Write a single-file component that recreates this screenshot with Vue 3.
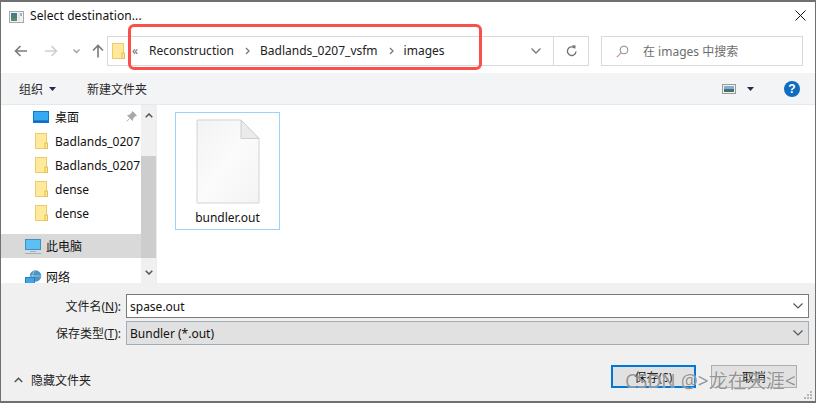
<script setup>
const pins = [
  { name: 'Badlands_0207' },
  { name: 'Badlands_0207' },
  { name: 'dense' },
  { name: 'dense' },
]
</script>

<template>
  <div class="win">
    <header class="title">
      <svg class="appicon" width="16" height="16" viewBox="0 0 16 16">
        <rect x="0.5" y="3.5" width="14" height="11" fill="#f2f2f2" stroke="#a8a8a8" />
        <rect x="2" y="5" width="6" height="8" fill="#3f7f86" />
        <rect x="2" y="10" width="6" height="3" fill="#5f8a5f" />
        <rect x="9" y="5" width="2" height="8" fill="#dfe5ea" />
        <rect x="11" y="5" width="2" height="3" fill="#9fb4c8" />
      </svg>
      <span class="title-text">Select destination...</span>
      <svg class="close" width="11" height="11" viewBox="0 0 11 11">
        <path d="M0.5 0.5L10.5 10.5M10.5 0.5L0.5 10.5" stroke="#111" stroke-width="1" fill="none" />
      </svg>
    </header>

    <nav class="navrow">
      <div class="navbtns">
        <svg width="14" height="12" viewBox="0 0 14 12" class="b1">
          <path d="M13 6H2M6.5 1L1.5 6l5 5" stroke="#7a7a7a" stroke-width="1.6" fill="none" />
        </svg>
        <svg width="14" height="12" viewBox="0 0 14 12" class="b2">
          <path d="M1 6h11M7.5 1l5 5-5 5" stroke="#cfcfcf" stroke-width="1.6" fill="none" />
        </svg>
        <svg width="7" height="5" viewBox="0 0 7 5" class="b3">
          <path d="M0.5 0.5L3.5 3.5L6.5 0.5" stroke="#9a9a9a" stroke-width="1.3" fill="none" />
        </svg>
        <svg width="12" height="14" viewBox="0 0 12 14" class="b4">
          <path d="M6 13.5V2M1 6.5l5-5 5 5" stroke="#7a7a7a" stroke-width="1.6" fill="none" />
        </svg>
      </div>
      <div class="address">
        <svg class="folder" width="13" height="16" viewBox="0 0 13 16">
          <rect x="0.5" y="0.5" width="11" height="15" fill="#ffe99b" stroke="#eccb6a" />
          <rect x="10" y="10" width="2.5" height="5.5" fill="#ffe99b" stroke="#e8bf55" stroke-width="1" />
        </svg>
        <span class="crumb-more">«</span>
        <span class="crumb c1">Reconstruction</span>
        <svg class="sep" width="5" height="8" viewBox="0 0 5 8"><path d="M1 1l3 3-3 3" stroke="#777" stroke-width="1.3" fill="none" /></svg>
        <span class="crumb">Badlands_0207_vsfm</span>
        <svg class="sep" width="5" height="8" viewBox="0 0 5 8"><path d="M1 1l3 3-3 3" stroke="#777" stroke-width="1.3" fill="none" /></svg>
        <span class="crumb">images</span>
        <svg class="addr-chev" width="10" height="6" viewBox="0 0 10 6"><path d="M0.5 0.5L5 5L9.5 0.5" stroke="#7a7a7a" stroke-width="1.4" fill="none" /></svg>
        <div class="refresh">
          <svg width="11" height="12" viewBox="0 0 11 12">
            <path d="M8.6 3A4.3 4.3 0 1 0 10 6.5" stroke="#6f6f6f" stroke-width="1.3" fill="none" />
            <path d="M6 0.2L9.6 0.6L9.2 4Z" fill="#6f6f6f" />
          </svg>
        </div>
      </div>
      <div class="search">
        <svg width="13" height="13" viewBox="0 0 13 13">
          <circle cx="8" cy="5" r="3.9" stroke="#8a8a8a" stroke-width="1" fill="none" />
          <path d="M5 8L0.8 12.2" stroke="#c79a8a" stroke-width="1.2" />
        </svg>
        <span>在 images 中搜索</span>
      </div>
    </nav>

    <div class="toolbar">
      <span class="tool t1">组织</span>
      <svg class="caret" width="7" height="4" viewBox="0 0 7 4"><path d="M0 0h7L3.500 4z" fill="#1f2d45" /></svg>
      <span class="tool t2">新建文件夹</span>
      <svg class="viewicon" width="14" height="10" viewBox="0 0 14 10">
        <rect x="0.5" y="0.5" width="13" height="9" fill="#eef3f7" stroke="#9a9a9a" />
        <rect x="2" y="2" width="10" height="3" fill="#7fb0d8" />
        <rect x="2" y="5" width="10" height="3" fill="#47705f" />
      </svg>
      <svg class="caret2" width="7" height="4" viewBox="0 0 7 4"><path d="M0 0h7L3.500 4z" fill="#1f2d45" /></svg>
      <div class="help">?</div>
    </div>

    <main class="content">
      <aside class="side">
        <div class="tree">
          <div class="row quick">
            <svg class="ic desk" width="16" height="12" viewBox="0 0 16 12">
              <rect x="0" y="0" width="16" height="12" fill="#0c78d0" />
              <rect x="1" y="1" width="14" height="9" fill="#37a8f2" />
              <path d="M1 10h14" stroke="#0a5fa8" />
            </svg>
            <span>桌面</span>
            <svg class="pin" width="11" height="11" viewBox="0 0 11 11">
              <path d="M6.500 0.500L10.500 4.500L9 5L6.800 7.500L6.500 9.500L1.500 4.500L3.500 4L6 1.800ZM3.500 7.500L0.500 10.500" fill="#a8a8a8" stroke="#a8a8a8" stroke-width="0.8" />
            </svg>
          </div>
          <div v-for="(p, i) in pins" :key="i" class="row quick">
            <svg class="ic fold" width="13" height="16" viewBox="0 0 13 16">
              <rect x="0.500" y="0.500" width="11" height="15" fill="#ffe99b" stroke="#eccb6a" />
              <rect x="10" y="10" width="2.500" height="5.500" fill="#ffe99b" stroke="#e8bf55" />
            </svg>
            <span>{{ p.name }}</span>
          </div>
          <div class="row pc">
            <svg class="ic" width="17" height="15" viewBox="0 0 17 15">
              <rect x="0.500" y="0.500" width="15" height="10" fill="#5cc0f5" stroke="#3f8fc4" />
              <path d="M5 12.500h6M0 14.500h16" stroke="#9fb0c4" stroke-width="1" />
            </svg>
            <span>此电脑</span>
          </div>
          <div class="row net">
            <svg class="ic" width="17" height="15" viewBox="0 0 17 15">
              <circle cx="10.500" cy="6" r="5.800" fill="#4f94c8" />
              <path d="M10 0.500C7 3 7 9 10 11.500M5 6h11" stroke="#a8d4ee" stroke-width="0.800" fill="none" />
              <rect x="0.500" y="7.500" width="9" height="7" fill="#3fa4e8" stroke="#2d7fba" />
            </svg>
            <span>网络</span>
          </div>
        </div>
        <div class="scroll">
          <svg class="arrow" width="8" height="5" viewBox="0 0 8 5"><path d="M0.700 4.300L4 1L7.300 4.300" stroke="#555" stroke-width="1.500" fill="none" /></svg>
          <div class="thumb"></div>
          <svg class="arrow arrow-d" width="8" height="5" viewBox="0 0 8 5"><path d="M0.700 0.700L4 4L7.300 0.700" stroke="#555" stroke-width="1.500" fill="none" /></svg>
        </div>
      </aside>
      <section class="files">
        <div class="tile">
          <svg width="64" height="85" viewBox="0 0 64 85">
            <defs>
              <linearGradient id="sheet" x1="0" y1="0" x2="1" y2="1">
                <stop offset="0" stop-color="#f3f3f3" />
                <stop offset="0.5" stop-color="#fbfbfb" />
                <stop offset="1" stop-color="#f4f4f4" />
              </linearGradient>
            </defs>
            <path d="M1 1H45L63 19.500V84H1Z" fill="url(#sheet)" stroke="#d4d4d4" stroke-width="1" />
            <path d="M45 1V19.500H63Z" fill="#ebebeb" stroke="#cfcfcf" stroke-width="1" />
          </svg>
          <span class="tile-label">bundler.out</span>
        </div>
      </section>
    </main>

    <footer class="bottom">
      <div class="field first">
        <label>文件名(<u>N</u>):</label>
        <div class="box input">
          <span>spase.out</span>
          <svg width="10" height="6" viewBox="0 0 10 6"><path d="M0.500 0.500L5 5L9.500 0.500" stroke="#555" stroke-width="1.200" fill="none" /></svg>
        </div>
      </div>
      <div class="field second">
        <label>保存类型(<u>T</u>):</label>
        <div class="box select">
          <span>Bundler (*.out)</span>
          <svg width="10" height="6" viewBox="0 0 10 6"><path d="M0.500 0.500L5 5L9.500 0.500" stroke="#555" stroke-width="1.200" fill="none" /></svg>
        </div>
      </div>
      <div class="actions">
        <div class="hide">
          <svg width="9" height="6" viewBox="0 0 9 6"><path d="M0.800 5L4.500 1.300L8.200 5" stroke="#555" stroke-width="1.600" fill="none" /></svg>
          <span>隐藏文件夹</span>
        </div>
        <div class="btn primary">保存(S)</div>
        <div class="btn">取消</div>
      </div>
      <svg class="grip" width="9" height="9" viewBox="0 0 9 9" fill="#b5b5b5">
        <rect x="6" y="0" width="2" height="2" /><rect x="3" y="3" width="2" height="2" /><rect x="6" y="3" width="2" height="2" />
        <rect x="0" y="6" width="2" height="2" /><rect x="3" y="6" width="2" height="2" /><rect x="6" y="6" width="2" height="2" />
      </svg>
    </footer>

    <div class="annot"></div>
    <div class="mark">CSDN @&gt;龙在天涯&lt;</div>
  </div>
</template>

<style scoped>
.win {
  position: relative;
  width: 816px;
  height: 403px;
  box-sizing: border-box;
  border: 1px solid #707070;
  border-bottom-width: 2px;
  border-top-width: 2px;
  background: #fff;
  display: flex;
  flex-direction: column;
  overflow: hidden;
  font-family: "Noto Sans", "Noto Sans CJK SC", sans-serif;
  font-size: 12px;
  color: #111;
}
.title {
  height: 27px;
  flex: none;
  display: flex;
  align-items: center;
  padding: 0 9px 0 8px;
  background: #fff;
}
.title-text { margin-left: 5px; font-size: 12px; letter-spacing: 0.1px; }
.close { margin-left: auto; }
.navrow {
  height: 44px;
  flex: none;
  display: flex;
  align-items: flex-start;
  padding-top: 7px;
  box-sizing: border-box;
}
.navbtns { width: 106px; height: 30px; flex: none; display: flex; align-items: center; }
.b1 { margin-left: 13px; }
.b2 { margin-left: 16px; }
.b3 { margin-left: 15px; }
.b4 { margin-left: 12px; }
.address {
  width: 482px;
  height: 30px;
  flex: none;
  box-sizing: border-box;
  border: 1px solid #d9d9d9;
  display: flex;
  align-items: center;
}
.folder { margin-left: 4px; }
.crumb-more { margin-left: 7px; color: #666; font-size: 12px; width: 12px; margin-bottom: 2px; }
.crumb { font-size: 12px; color: #222; margin-bottom: 2px; }
.c1 { margin-left: 5px; }
.sep { margin: 0 10px 0 11px; }
.addr-chev { margin-left: auto; margin-right: 12px; }
.refresh {
  width: 34px;
  height: 28px;
  border-left: 1px solid #d9d9d9;
  display: flex;
  align-items: center;
  justify-content: center;
}
.search {
  width: 202px;
  height: 30px;
  margin-left: 12px;
  flex: none;
  box-sizing: border-box;
  border: 1px solid #d9d9d9;
  display: flex;
  align-items: center;
  padding-left: 14px;
  color: #6d6d6d;
}
.search span { margin-left: 14px; }
.toolbar {
  height: 32px;
  flex: none;
  box-sizing: border-box;
  background: #f3f4f6;
  border-bottom: 1px solid #e8e8e8;
  display: flex;
  align-items: center;
  color: #2b2b2b;
}
.t1 { margin-left: 18px; }
.caret { margin-left: 6px; }
.t2 { margin-left: 31px; }
.viewicon { margin-left: auto; }
.caret2 { margin-left: 11px; }
.help {
  width: 16px;
  height: 16px;
  margin: 0 15px 0 30px;
  border-radius: 50%;
  background: #0f6cc0;
  color: #fff;
  font: bold 12px/16px "Liberation Sans", sans-serif;
  text-align: center;
}
.content {
  height: 178px;
  flex: none;
  display: flex;
  background: #fff;
}
.side {
  width: 155px;
  flex: none;
  display: flex;
  border-right: 1px solid #ededed;
}
.tree {
  width: 140px;
  flex: none;
  overflow: hidden;
}
.row {
  height: 24px;
  display: flex;
  align-items: center;
  white-space: nowrap;
  position: relative;
}
.quick .ic { margin-left: 34px; margin-right: 7px; flex: none; }
.quick .desk { margin-left: 32px; margin-right: 6px; }
.pin { position: absolute; left: 125px; top: 6px; }
.pc {
  margin-top: 9px;
  background: #d9d9d9;
}
.pc .ic { margin-left: 24px; margin-right: 4px; flex: none; }
.net { margin-top: 7px; }
.net .ic { margin-left: 24px; margin-right: 4px; flex: none; }
.scroll {
  width: 15px;
  flex: none;
  background: #f0f0f0;
  display: flex;
  flex-direction: column;
  align-items: center;
  padding-top: 8px;
  box-sizing: border-box;
}
.arrow { flex: none; }
.thumb {
  width: 15px;
  height: 102px;
  margin-top: 38px;
  background: #cdcdcd;
  flex: none;
}
.arrow-d { margin-top: 12px; }
.files { flex: 1; padding: 7px 0 0 18px; }
.tile {
  width: 105px;
  height: 118px;
  box-sizing: border-box;
  border: 1px solid #99d1ff;
  display: flex;
  flex-direction: column;
  align-items: center;
  padding-top: 6px;
}
.tile-label { margin-top: 6px; font-size: 12px; line-height: 16px; color: #111; }
.bottom {
  flex: 1;
  position: relative;
  background: #f0f0f0;
  padding-top: 11px;
  min-height: 0;
}
.field { display: flex; align-items: center; height: 24px; }
.second { margin-top: 3px; }
.field label { width: 120px; text-align: right; flex: none; color: #222; }
.box {
  margin-left: 5px;
  width: 683px;
  height: 24px;
  flex: none;
  box-sizing: border-box;
  display: flex;
  align-items: center;
  justify-content: space-between;
  padding: 0 5px 0 3px;
}
.input { background: #fff; border: 1px solid #7a7a7a; }
.select { background: #e1e1e1; border: 1px solid #a3adb5; }
.actions { display: flex; align-items: center; margin-top: 20px; height: 23px; }
.hide { display: flex; align-items: center; margin: 6px auto 0 13px; color: #222; }
.hide span { margin-left: 8px; }
.btn {
  width: 86px;
  height: 23px;
  box-sizing: border-box;
  border: 1px solid #adadad;
  background: #e1e1e1;
  display: flex;
  align-items: center;
  justify-content: center;
  margin-right: 18px;
}
.primary { border: 2px solid #0078d7; width: 85px; margin-right: 15px; }
.grip { position: absolute; right: 2px; bottom: 1px; }
.annot {
  position: absolute;
  left: 127px;
  top: 22px;
  width: 354px;
  height: 46px;
  box-sizing: border-box;
  border: 3px solid #f9504c;
  border-radius: 6px;
}
.mark {
  position: absolute;
  left: 624px;
  top: 366px;
  font-size: 19px;
  line-height: 26px;
  white-space: nowrap;
  color: rgba(120, 120, 120, 0.8);
  text-shadow: 0 0 1px #fff;
}
</style>

<style>
html, body { margin: 0; background: #fff; }
</style>
